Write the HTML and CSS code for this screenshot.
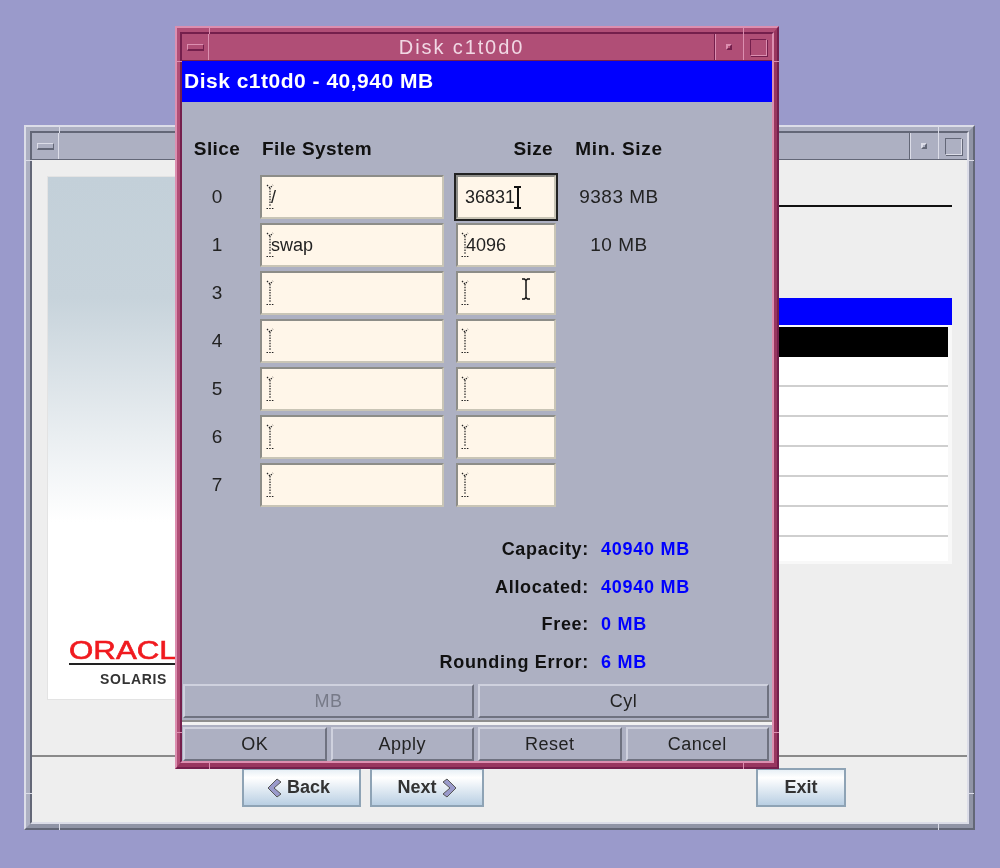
FILE: index.html
```html
<!DOCTYPE html>
<html lang="en">
<head>
    <title>Disk c1t0d0</title>
    <link rel="stylesheet" href="styles.css">
</head>
<body>
    <svg class="defs" width="0" height="0">
        <symbol id="dotted-i" viewBox="0 0 8 26">
            <path d="M1 1l3 3 3-3M4 4v18M.5 24.500h7" fill="none" stroke="#222" stroke-width="1.200" stroke-dasharray="1.500 1.200"/>
        </symbol>
    </svg>

    <div class="window back-window">
        <div class="titlebar">
            <div class="wm-btn wm-menu"><span class="glyph-min"></span></div>
            <div class="title-fill"></div>
            <div class="wm-btn wm-small"><span class="glyph-dot"></span></div>
            <div class="wm-btn wm-large"><span class="glyph-box"></span></div>
        </div>
        <div class="back-main">
            <div class="side-image">
                <div class="brand">
                    <div class="brand-oracle"><span>ORACLE</span></div>
                    <div class="brand-solaris">SOLARIS</div>
                </div>
            </div>
            <div class="back-right">
                <div class="rule"></div>
                <div class="blue-strip"></div>
                <div class="list">
                    <div class="list-row selected"></div>
                    <div class="list-row"></div>
                    <div class="list-row"></div>
                    <div class="list-row"></div>
                    <div class="list-row"></div>
                    <div class="list-row"></div>
                    <div class="list-row"></div>
                    <div class="list-row last"></div>
                </div>
            </div>
        </div>
        <div class="back-footer">
            <button class="nav-btn btn-back">
                <svg width="15" height="20" viewBox="0 0 15 20"><path d="M10 1l4 3-7 6 7 6-4 3L1 10z" fill="#9a9acb" stroke="#555" stroke-width="1"/></svg>
                Back
            </button>
            <button class="nav-btn btn-next">
                Next
                <svg width="15" height="20" viewBox="0 0 15 20"><path d="M5 1L1 4l7 6-7 6 4 3 9-9z" fill="#9a9acb" stroke="#555" stroke-width="1"/></svg>
            </button>
            <button class="nav-btn btn-exit">Exit</button>
        </div>
        <span class="tick tick-top tick-l"></span>
        <span class="tick tick-top tick-r"></span>
        <span class="tick tick-bottom tick-l"></span>
        <span class="tick tick-bottom tick-r"></span>
        <span class="tick tick-side tick-left-top"></span>
        <span class="tick tick-side tick-right-top"></span>
        <span class="tick tick-side tick-left-bottom"></span>
        <span class="tick tick-side tick-right-bottom"></span>
    </div>

    <div class="window dialog">
        <div class="titlebar">
            <div class="wm-btn wm-menu"><span class="glyph-min"></span></div>
            <div class="title-fill">Disk c1t0d0</div>
            <div class="wm-btn wm-small"><span class="glyph-dot"></span></div>
            <div class="wm-btn wm-large"><span class="glyph-box"></span></div>
        </div>
        <div class="dialog-head">Disk c1t0d0 - 40,940 MB</div>
        <div class="dialog-body">
            <div class="slices">
                <div class="col-head slice-head">Slice</div>
                <div class="col-head fs-head">File System</div>
                <div class="col-head size-head">Size</div>
                <div class="col-head min-head">Min. Size</div>

                <div class="slice-no">0</div>
                <div class="field fs"><svg class="cur"><use href="#dotted-i"/></svg><span class="val">/</span></div>
                <div class="field size focused"><span>36831</span><span class="caret"></span></div>
                <div class="min-size">9383 MB</div>

                <div class="slice-no">1</div>
                <div class="field fs"><svg class="cur"><use href="#dotted-i"/></svg><span class="val">swap</span></div>
                <div class="field size"><svg class="cur"><use href="#dotted-i"/></svg><span class="val">4096</span></div>
                <div class="min-size">10 MB</div>

                <div class="slice-no">3</div>
                <div class="field fs"><svg class="cur"><use href="#dotted-i"/></svg></div>
                <div class="field size"><svg class="cur"><use href="#dotted-i"/></svg></div>
                <div class="min-size"></div>

                <div class="slice-no">4</div>
                <div class="field fs"><svg class="cur"><use href="#dotted-i"/></svg></div>
                <div class="field size"><svg class="cur"><use href="#dotted-i"/></svg></div>
                <div class="min-size"></div>

                <div class="slice-no">5</div>
                <div class="field fs"><svg class="cur"><use href="#dotted-i"/></svg></div>
                <div class="field size"><svg class="cur"><use href="#dotted-i"/></svg></div>
                <div class="min-size"></div>

                <div class="slice-no">6</div>
                <div class="field fs"><svg class="cur"><use href="#dotted-i"/></svg></div>
                <div class="field size"><svg class="cur"><use href="#dotted-i"/></svg></div>
                <div class="min-size"></div>

                <div class="slice-no">7</div>
                <div class="field fs"><svg class="cur"><use href="#dotted-i"/></svg></div>
                <div class="field size"><svg class="cur"><use href="#dotted-i"/></svg></div>
                <div class="min-size"></div>
            </div>

            <div class="summary">
                <div class="sum-label">Capacity:</div><div class="sum-value">40940 MB</div>
                <div class="sum-label">Allocated:</div><div class="sum-value">40940 MB</div>
                <div class="sum-label">Free:</div><div class="sum-value">0 MB</div>
                <div class="sum-label">Rounding Error:</div><div class="sum-value">6 MB</div>
            </div>
        </div>
        <div class="btn-row two">
            <button class="motif-btn disabled">MB</button>
            <button class="motif-btn">Cyl</button>
        </div>
        <div class="btn-sep"></div>
        <div class="btn-row four">
            <button class="motif-btn">OK</button>
            <button class="motif-btn">Apply</button>
            <button class="motif-btn">Reset</button>
            <button class="motif-btn">Cancel</button>
        </div>
        <span class="tick tick-top tick-l"></span>
        <span class="tick tick-top tick-r"></span>
        <span class="tick tick-bottom tick-l"></span>
        <span class="tick tick-bottom tick-r"></span>
        <span class="tick tick-side tick-left-top"></span>
        <span class="tick tick-side tick-right-top"></span>
        <span class="tick tick-side tick-left-bottom"></span>
        <span class="tick tick-side tick-right-bottom"></span>
    </div>

    <svg class="mouse" width="12" height="22" viewBox="0 0 12 22">
        <path d="M2 1h2.500L6 2.500 7.500 1H10M6 2.500v17M2 21h2.500L6 19.500 7.500 21H10" fill="none" stroke="#111" stroke-width="1.500"/>
    </svg>
</body>
</html>
```

FILE: styles.css
```css
* {
    box-sizing: border-box;
}

body {
    margin: 0;
    width: 1000px;
    height: 868px;
    position: relative;
    overflow: hidden;
    background-color: #9a9acb;
    font-family: "Liberation Sans", Arial, sans-serif;
    color: #111;
}

.defs {
    position: absolute;
}

/* window frames */
.window {
    position: absolute;
    display: flex;
    flex-direction: column;
    border-style: solid;
    border-width: 8px;
    border-color: var(--base) var(--dark) var(--dark) var(--base);
    background-color: var(--base);
    filter: blur(0.4px);
}

.window::before {
    content: "";
    position: absolute;
    inset: -8px;
    border: 2px solid;
    border-color: var(--light) var(--deep) var(--deep) var(--light);
    pointer-events: none;
}

.window::after {
    content: "";
    position: absolute;
    inset: -2px;
    border: 2px solid;
    border-color: var(--deep) var(--light) var(--light) var(--deep);
    pointer-events: none;
}

.back-window {
    --base: #adb0c2;
    --light: #dcdde8;
    --dark: #9094a6;
    --deep: #636777;
    left: 24px;
    top: 125px;
    width: 951px;
    height: 705px;
    z-index: 1;
}

.dialog {
    --base: #b04e76;
    --light: #dc8fb0;
    --dark: #98365f;
    --deep: #741f4c;
    left: 175px;
    top: 26px;
    width: 604px;
    height: 743px;
    border-width: 8px 7px 8px 7px;
    z-index: 2;
}

.dialog::before {
    inset: -8px -7px;
}

.titlebar {
    display: flex;
    height: 27px;
    flex: none;
    background-color: var(--base);
    border-bottom: 1px solid var(--deep);
}

.wm-btn {
    display: flex;
    align-items: center;
    justify-content: center;
    border-left: 1px solid var(--light);
    border-right: 1px solid var(--deep);
}

.wm-menu {
    width: 27px;
    border-left: 0;
    border-right-color: var(--light);
}

.wm-small {
    width: 28px;
    border-right-color: transparent;
}

.wm-large {
    width: 29px;
    border-right: 0;
}

.title-fill {
    flex: 1;
    border-right: 1px solid var(--deep);
    text-align: center;
    font-size: 20px;
    line-height: 27px;
    letter-spacing: 1.900px;
    color: #f1d8e4;
}

.glyph-min {
    width: 17px;
    height: 7px;
    background-color: var(--base);
    border: 1px solid;
    border-bottom-width: 2px;
    border-color: var(--light) var(--deep) var(--deep) var(--light);
}

.glyph-dot {
    width: 6px;
    height: 6px;
    background-color: var(--base);
    border: 2px solid;
    border-color: var(--light) var(--deep) var(--deep) var(--light);
}

.glyph-box {
    width: 17px;
    height: 17px;
    border: 1px solid;
    border-color: var(--deep) var(--light) var(--light) var(--deep);
    box-shadow: 1px 1px 0 var(--deep);
}

/* little resize corner marks */
.tick {
    position: absolute;
    background-color: var(--light);
    z-index: 3;
}

.tick-top, .tick-bottom {
    width: 1px;
    height: 8px;
}

.tick-top {
    top: -8px;
}

.tick-bottom {
    bottom: -8px;
}

.tick-l {
    left: 27px;
}

.tick-r {
    right: 28px;
}

.tick-side {
    width: 7px;
    height: 1px;
}

.tick-left-top, .tick-left-bottom {
    left: -7px;
}

.tick-right-top, .tick-right-bottom {
    right: -7px;
}

.tick-left-top, .tick-right-top {
    top: 27px;
}

.tick-left-bottom, .tick-right-bottom {
    bottom: 28px;
}

/* back window */
.back-main {
    flex: 1;
    display: flex;
    gap: 10px;
    padding: 16px 0 0 15px;
    background-color: #eeeeee;
    border-bottom: 2px solid #8a8a8a;
}

.side-image {
    width: 204px;
    height: 524px;
    position: relative;
    flex: none;
    background: linear-gradient(#c3d0d9 0, #c7d3db 120px, #ffffff 345px);
    border: 1px solid #e3e3e3;
}

.brand {
    position: absolute;
    left: 21px;
    top: 460px;
    width: 130px;
}

.brand-oracle {
    height: 28px;
    border-bottom: 2px solid #222;
    font-size: 25px;
    line-height: 26px;
    color: #f01a1f;
    white-space: nowrap;
}

.brand-oracle span {
    display: inline-block;
    transform: scaleX(1.25);
    transform-origin: left top;
    -webkit-text-stroke: 0.6px #f01a1f;
}

.brand-solaris {
    padding: 6px 0 0 31px;
    font-size: 14px;
    font-weight: bold;
    letter-spacing: 0.7px;
    color: #333;
    white-space: nowrap;
}

.back-right {
    flex: 1;
    padding-right: 15px;
}

.rule {
    margin-top: 29px;
    height: 2px;
    background-color: #111;
}

.blue-strip {
    margin-top: 91px;
    height: 27px;
    background-color: #0000ff;
}

.list {
    padding: 2px 4px 3px 0;
    background-color: #f8f8f8;
}

.list-row {
    height: 30px;
    background-color: #fff;
    border-bottom: 2px solid #cfcfcf;
}

.list-row.selected {
    background-color: #000;
    border-bottom: 0;
}

.list-row.last {
    height: 24px;
    border-bottom: 0;
}

.back-footer {
    flex: none;
    height: 65px;
    display: flex;
    align-items: flex-start;
    gap: 9px;
    padding: 11px 0 0 210px;
    background-color: #eeeeee;
}

.nav-btn {
    height: 39px;
    display: flex;
    align-items: center;
    justify-content: center;
    gap: 5px;
    padding: 0;
    border: 2px solid #8ea3b5;
    background: linear-gradient(#e8f0f6 0, #ffffff 22%, #b9cfe3 100%);
    font: bold 18px "Liberation Sans", Arial, sans-serif;
    color: #333;
}

.btn-back {
    width: 119px;
    padding-right: 6px;
}

.btn-next {
    width: 114px;
}

.btn-exit {
    width: 90px;
    margin-left: 263px;
}

/* dialog */
.dialog-head {
    flex: none;
    height: 41px;
    padding-left: 2px;
    background-color: #0000ff;
    color: #fff;
    font-size: 21px;
    font-weight: bold;
    line-height: 39px;
    letter-spacing: 0.5px;
}

.dialog-body {
    flex: 1;
    background-color: #adb0c2;
}

.slices {
    display: grid;
    grid-template-columns: 78px 196px 110px 106px;
    grid-template-rows: 34px repeat(7, 44px);
    row-gap: 4px;
    padding-top: 35px;
}

.col-head {
    font-size: 19px;
    font-weight: bold;
    line-height: 24px;
    letter-spacing: 0.4px;
    white-space: nowrap;
}

.slice-head {
    padding-right: 8px;
    text-align: center;
}

.fs-head {
    padding-left: 2px;
}

.size-head {
    text-align: right;
    padding-right: 13px;
}

.min-head {
    text-align: center;
    letter-spacing: 0.7px;
}

.slice-no, .min-size {
    font-size: 19px;
    line-height: 44px;
    text-align: center;
    color: #222;
}

.slice-no {
    padding-right: 8px;
}

.min-size {
    letter-spacing: 0.5px;
    white-space: nowrap;
}

.field {
    display: flex;
    align-items: center;
    height: 44px;
    background-color: #fff6e9;
    border: 2px solid;
    border-color: #8d8d88 #c9c5b6 #c9c5b6 #8d8d88;
    font-size: 18px;
    color: #222;
}

.field.fs {
    padding-left: 4px;
    margin-right: 12px;
}

.field.size {
    padding-left: 3px;
    margin-right: 10px;
}

.field.focused {
    outline: 2px solid #222;
    padding-left: 7px;
}

.cur {
    width: 8px;
    height: 26px;
    flex: none;
}

.val {
    margin-left: -3px;
}

.caret {
    width: 7px;
    height: 23px;
    margin-left: -1px;
    border: solid #111;
    border-width: 2px 0;
    background: linear-gradient(#111, #111) center / 2px 100% no-repeat;
}

.summary {
    display: grid;
    grid-template-columns: 407px auto;
    column-gap: 12px;
    grid-auto-rows: 37.500px;
    margin-top: 24px;
    font-size: 18px;
    font-weight: bold;
    line-height: 37px;
}

.sum-label {
    text-align: right;
    letter-spacing: 0.7px;
    white-space: nowrap;
}

.sum-value {
    color: #0000ff;
    letter-spacing: 0.75px;
}

.btn-row {
    flex: none;
    display: grid;
    gap: 4px;
    height: 34px;
    padding: 0 3px 0 1px;
    background-color: #adb0c2;
}

.btn-row.two {
    grid-template-columns: 1fr 1fr;
}

.btn-row.four {
    grid-template-columns: 1fr 1fr 1fr 1fr;
}

.btn-sep {
    flex: none;
    height: 9px;
    background: linear-gradient(#adb0c2 0 2px, #8e8e8e 2px 4px, #f2f2f2 4px 7px, #adb0c2 7px);
}

.motif-btn {
    padding: 0;
    background-color: #adb0c2;
    border: 2px solid;
    border-color: #cfd1de #6f7280 #6f7280 #cfd1de;
    font: 18px "Liberation Sans", Arial, sans-serif;
    letter-spacing: 0.5px;
    color: #222;
}

.motif-btn.disabled {
    color: #777a88;
}

.mouse {
    position: absolute;
    left: 520px;
    top: 278px;
    z-index: 3;
}
```
